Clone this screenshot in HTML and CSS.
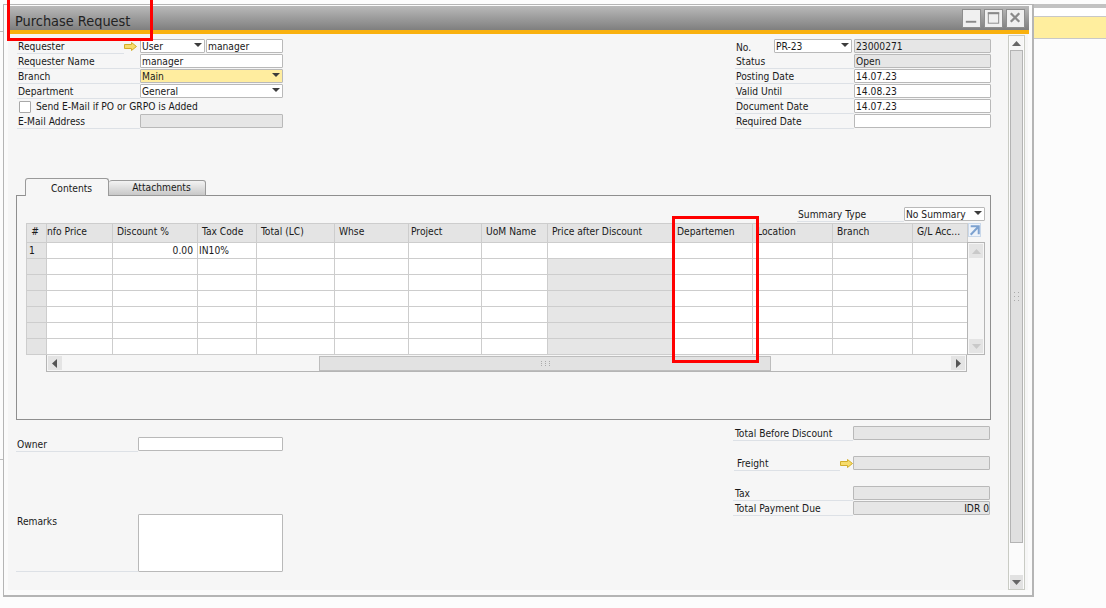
FILE: index.html
```html
<!DOCTYPE html>
<html lang="en">
<head>
<meta charset="utf-8">
<title>Purchase Request</title>
<link rel="stylesheet" href="styles.css">
</head>
<body>
<div class="desk-line desk-line-a"></div>
<div class="desk-line desk-line-b"></div>
<div class="behind">
  <div class="behind-top"></div>
  <div class="behind-white"></div>
  <div class="behind-yellow"></div>
</div>

<main class="window">
  <header class="titlebar">
    <h1 class="title">Purchase Request</h1>
    <div class="winbtns">
      <button class="winbtn"><svg width="18" height="18" viewBox="0 0 18 18"><rect x="3" y="12" width="11" height="2" fill="#8a8a8a"/></svg></button>
      <button class="winbtn"><svg width="18" height="18" viewBox="0 0 18 18"><rect x="3.5" y="3.5" width="11" height="11" fill="none" stroke="#8a8a8a"/><rect x="3" y="3" width="12" height="2" fill="#8a8a8a"/></svg></button>
      <button class="winbtn"><svg width="18" height="18" viewBox="0 0 18 18"><path d="M4 4l9 9M13 4l-9 9" stroke="#8a8a8a" stroke-width="2.4" fill="none"/></svg></button>
    </div>
  </header>
  <div class="accent"></div>

  <div class="client">
    <div class="content">
      <section class="head">
        <div class="col-left">
          <div class="row">
            <span class="lbl lbl-req">Requester</span>
            <svg class="arrow" width="13" height="9" viewBox="0 0 13 9"><path d="M.5 2.500h7V.5l5 4-5 4v-2h-7z" fill="#f7dc6c" stroke="#d3ae2c"/></svg>
            <span class="sel sel-user">User<i class="tri"></i></span>
            <span class="fld fld-mgr">manager</span>
          </div>
          <div class="row"><span class="lbl">Requester Name</span><span class="fld fld-full">manager</span></div>
          <div class="row"><span class="lbl">Branch</span><span class="sel fld-full sel-yellow">Main<i class="tri"></i></span></div>
          <div class="row"><span class="lbl">Department</span><span class="sel fld-full">General<i class="tri"></i></span></div>
          <div class="row row-check"><span class="check"></span><span class="check-text">Send E-Mail if PO or GRPO is Added</span></div>
          <div class="row"><span class="lbl">E-Mail Address</span><span class="fld fld-full fld-off"></span></div>
        </div>
        <div class="col-right">
          <div class="row">
            <span class="lbl lbl-no">No.</span>
            <span class="sel sel-no">PR-23<i class="tri"></i></span>
            <span class="fld fld-r fld-off">23000271</span>
          </div>
          <div class="row"><span class="lbl lbl-r">Status</span><span class="fld fld-r fld-off">Open</span></div>
          <div class="row"><span class="lbl lbl-r">Posting Date</span><span class="fld fld-r">14.07.23</span></div>
          <div class="row"><span class="lbl lbl-r">Valid Until</span><span class="fld fld-r">14.08.23</span></div>
          <div class="row"><span class="lbl lbl-r">Document Date</span><span class="fld fld-r">14.07.23</span></div>
          <div class="row"><span class="lbl lbl-r">Required Date</span><span class="fld fld-r"></span></div>
        </div>
      </section>

      <nav class="tabs">
        <span class="tab tab-on">Contents</span>
        <span class="tab tab-off">Attachments</span>
      </nav>
      <section class="panel">
        <div class="summary">
          <span class="lbl lbl-sum">Summary Type</span>
          <span class="sel sel-sum">No Summary<i class="tri"></i></span>
        </div>
        <div class="gridwrap">
          <div class="gridmain">
            <table class="grid">
              <colgroup>
                <col class="c-n"><col class="c-a"><col class="c-b"><col class="c-c"><col class="c-d"><col class="c-e"><col class="c-f"><col class="c-g"><col class="c-h"><col class="c-i"><col class="c-i"><col class="c-i"><col class="c-j">
              </colgroup>
              <thead>
                <tr><th class="num">#</th><th class="clip">nfo Price</th><th>Discount %</th><th>Tax Code</th><th>Total (LC)</th><th>Whse</th><th class="tight">Project</th><th>UoM Name</th><th>Price after Discount</th><th>Departemen</th><th>Location</th><th>Branch</th><th>G/L Acc...</th></tr>
              </thead>
              <tbody>
                <tr><td class="rn">1</td><td></td><td class="right">0.00</td><td>IN10%</td><td></td><td></td><td></td><td></td><td></td><td></td><td></td><td></td><td></td></tr>
                <tr><td class="rn"></td><td></td><td></td><td></td><td></td><td></td><td></td><td></td><td class="off"></td><td></td><td></td><td></td><td></td></tr>
                <tr><td class="rn"></td><td></td><td></td><td></td><td></td><td></td><td></td><td></td><td class="off"></td><td></td><td></td><td></td><td></td></tr>
                <tr><td class="rn"></td><td></td><td></td><td></td><td></td><td></td><td></td><td></td><td class="off"></td><td></td><td></td><td></td><td></td></tr>
                <tr><td class="rn"></td><td></td><td></td><td></td><td></td><td></td><td></td><td></td><td class="off"></td><td></td><td></td><td></td><td></td></tr>
                <tr><td class="rn"></td><td></td><td></td><td></td><td></td><td></td><td></td><td></td><td class="off"></td><td></td><td></td><td></td><td></td></tr>
                <tr><td class="rn"></td><td></td><td></td><td></td><td></td><td></td><td></td><td></td><td class="off"></td><td></td><td></td><td></td><td></td></tr>
              </tbody>
            </table>
            <div class="hscroll">
              <span class="sb-btn"><svg width="6" height="9" viewBox="0 0 6 9"><path d="M5 0v9L0 4.500z" fill="#555"/></svg></span>
              <span class="hspace hspace-a"></span>
              <span class="hthumb"><svg width="9" height="5" viewBox="0 0 9 5"><path d="M0 0h1v1H0zM4 0h1v1H4zM8 0h1v1H8zM0 2h1v1H0zM4 2h1v1H4zM8 2h1v1H8zM0 4h1v1H0zM4 4h1v1H4zM8 4h1v1H8z" fill="#aaa"/></svg></span>
              <span class="hspace"></span>
              <span class="sb-btn"><svg width="6" height="9" viewBox="0 0 6 9"><path d="M1 0v9l5-4.500z" fill="#555"/></svg></span>
            </div>
          </div>
          <div class="gridside">
            <span class="expand"><svg width="11" height="11" viewBox="0 0 13 13"><path d="M2 1.500h9.500V11M11 2L2 11.500" fill="none" stroke="#7da2d0" stroke-width="2.400"/></svg></span>
            <div class="vscroll">
              <span class="v-btn"><svg width="9" height="5" viewBox="0 0 9 5"><path d="M0 5h9L4.500 0z" fill="#c9c9c9"/></svg></span>
              <span class="v-btn"><svg width="9" height="5" viewBox="0 0 9 5"><path d="M0 0h9L4.500 5z" fill="#c9c9c9"/></svg></span>
            </div>
          </div>
        </div>
      </section>

      <section class="foot">
        <div class="foot-left">
          <div class="row foot-owner"><span class="lbl lbl-foot">Owner</span><span class="fld fld-foot"></span></div>
          <div class="row foot-remarks"><span class="lbl lbl-foot lbl-top">Remarks</span><span class="fld fld-foot fld-area"></span></div>
        </div>
        <div class="foot-right">
          <div class="row"><span class="lbl lbl-tot">Total Before Discount</span><span class="fld fld-tot fld-off"></span></div>
          <div class="row gap-row"><span class="lbl lbl-fr">Freight</span><svg class="arrow arrow-fr" width="13" height="9" viewBox="0 0 13 9"><path d="M.5 2.500h7V.5l5 4-5 4v-2h-7z" fill="#f7dc6c" stroke="#d3ae2c"/></svg><span class="fld fld-tot fld-off"></span></div>
          <div class="row gap-row"><span class="lbl lbl-tot">Tax</span><span class="fld fld-tot fld-off"></span></div>
          <div class="row"><span class="lbl lbl-tot">Total Payment Due</span><span class="fld fld-tot fld-off right">IDR 0</span></div>
        </div>
      </section>
    </div>

    <aside class="mainscroll">
      <span class="ms-btn ms-up"><svg width="9" height="5" viewBox="0 0 9 5"><path d="M0 5h9L4.500 0z" fill="#666"/></svg></span>
      <span class="ms-thumb"><svg width="5" height="9" viewBox="0 0 5 9"><path d="M0 0h1v1H0zM4 0h1v1H4zM0 4h1v1H0zM4 4h1v1H4zM0 8h1v1H0zM4 8h1v1H4z" fill="#aaa"/></svg></span>
      <span class="ms-space"></span>
      <span class="ms-btn ms-down"><svg width="9" height="5" viewBox="0 0 9 5"><path d="M0 0h9L4.500 5z" fill="#666"/></svg></span>
    </aside>
  </div>
</main>

<div class="mark mark-title"></div>
<div class="mark mark-col"></div>
</body>
</html>
```
FILE: styles.css
```css
* { box-sizing: border-box; }
html, body { margin: 0; height: 608px; overflow: hidden; }
body {
  background: #fcfcfc;
  font-family: "DejaVu Sans", "Noto Sans", sans-serif;
  font-stretch: condensed;
  font-size: 10.2px;
  color: #1a1a1a;
  position: relative;
}
.desk-line { position: absolute; left: 0; width: 4px; height: 1px; background: #bdbdbd; }
.desk-line-a { top: 31px; }
.desk-line-b { top: 459px; }
.behind { position: absolute; left: 1034px; top: 4px; width: 72px; }
.behind-top { height: 4px; background: #c2c2c2; }
.behind-white { height: 9px; background: #fff; border-bottom: 1px solid #c8c8c8; }
.behind-yellow { height: 22px; background: #ffee9e; border-bottom: 1px solid #c8c8c8; }

.window {
  position: absolute;
  left: 3px; top: 4px;
  width: 1031px; height: 593px;
  background: #fbfbfb;
  border: 1px solid #b5b5b5;
  border-right-width: 2px;
  border-bottom-width: 2px;
  padding: 1px 4px 5px 4px;
  display: flex;
  flex-direction: column;
}
.titlebar {
  height: 24px;
  margin-right: -1px;
  background: linear-gradient(#b9b9b9, #7f7f7f);
  display: flex;
  align-items: center;
  justify-content: space-between;
  padding: 0 4px 0 7px;
}
.title { margin: 0; padding-top: 5px; font-size: 14.4px; line-height: 18px; font-weight: 400; color: #222; }
.winbtns { display: flex; gap: 3px; }
.winbtn {
  width: 19px; height: 19px; padding: 0;
  background: #f0f0f0; border: 1px solid #8e8e8e;
  display: flex; align-items: center; justify-content: center;
}
.accent { height: 4px; margin-right: -1px; background: #f9b10f; }

.client {
  flex: 1;
  display: flex;
  background: #f6f6f6;
  min-height: 0;
}
.content { width: 1000px; padding: 5px 0 0 8px; }

.head { display: flex; justify-content: space-between; width: 975px; height: 142px; }
.col-left { width: 266px; margin-left: 1px; }
.col-right { width: 256px; }
.row { display: flex; height: 15px; align-items: stretch; }

.lbl {
  display: flex; align-items: center;
  width: 123px; height: 15px; padding: 1px 0 0 1px;
  border-bottom: 1px solid #dde1e6;
  white-space: nowrap;
  line-height: 13px;
}
.lbl-req { width: 107px; }
.lbl-r { width: 119px; }
.lbl-no { width: 39px; border-bottom: 0; }
.arrow { margin: 3px 3px 0 0; flex: none; }
.arrow-fr { margin-right: 0; }

.fld, .sel {
  display: block; position: relative;
  height: 14px; line-height: 12px;
  background: #fff;
  border: 1px solid #b9b9b9;
  border-radius: 1px;
  padding: 1px 0 0 1px;
  white-space: nowrap;
}
.fld-full { width: 143px; }
.sel-user { width: 65px; }
.fld-mgr { width: 77px; margin-left: 1px; }
.sel-yellow { background: #ffed9f; }
.fld-off { background: #e6e6e6; }
.fld-r { width: 137px; }
.sel-no { width: 78px; margin-right: 2px; }
.right { text-align: right; }
.tri {
  position: absolute; right: 2px; top: 3px;
  width: 0; height: 0;
  border-left: 4px solid transparent;
  border-right: 4px solid transparent;
  border-top: 4px solid #3c3c3c;
}
.row-check { align-items: center; padding-left: 2px; }
.check { width: 12px; height: 12px; background: #fff; border: 1px solid #a8a8a8; border-radius: 1px; }
.check-text { margin-left: 5px; }

.tabs { display: flex; height: 18px; padding-left: 9px; margin-top: -3px; position: relative; z-index: 1; margin-bottom: -1px; }
.tab { display: flex; align-items: center; justify-content: center; border: 1px solid #9a9a9a; border-radius: 3px 3px 0 0; padding: 0 0 1px 9px; }
.tab-on { width: 84px; background: #f6f6f6; border-bottom: 0; padding-top: 2px; }
.tab-off { width: 97px; height: 16px; margin-top: 2px; background: linear-gradient(#f3f3f3, #c8c8c8); border-left: 0; }

.panel {
  width: 975px; height: 225px;
  border: 1px solid #8f8f8f;
  padding: 11px 5px 0 10px;
}
.summary { display: flex; justify-content: flex-end; height: 15px; align-items: flex-start; }
.lbl-sum { width: 107px; padding-left: 1px; }
.sel-sum { width: 81px; }

.gridwrap { display: flex; margin: 1px 0 0 -1px; }
.gridmain { width: 941px; }
.gridside { width: 18px; }
.grid { border-collapse: collapse; table-layout: fixed; width: 941px; }
.c-n { width: 20px; } .c-a { width: 66px; } .c-b { width: 85px; } .c-c { width: 59px; }
.c-d { width: 78px; } .c-e { width: 74px; } .c-f { width: 73px; } .c-g { width: 66px; }
.c-h { width: 125px; } .c-i { width: 80px; } .c-j { width: 55px; }
.grid th {
  height: 19px; padding: 0 0 3px 4px;
  background: #e4e4e4;
  border: 1px solid #cdcdcd;
  font-weight: 400; text-align: left; white-space: nowrap; overflow: hidden;
}
.grid th.num { text-align: center; padding: 0 3px 3px 0; }
.grid th.clip { padding-left: 0; }
.grid th.tight { padding-left: 2px; }
.grid td {
  height: 16px; padding: 0 4px 0 1px;
  background: #fff;
  border: 1px solid #cdcdcd;
  line-height: 12px;
}
.grid td.rn { background: #e4e4e4; padding-left: 2px; }
.grid td.off { background: #e6e6e6; }
.grid td.right { text-align: right; }

.hscroll {
  display: flex; align-items: center;
  margin-left: 20px; height: 17px; padding: 1px;
  border: solid #b5b5b5; border-width: 0 1px 1px 1px;
}
.sb-btn { width: 14px; height: 14px; background: #e4e4e4; display: flex; align-items: center; justify-content: center; }
.hspace { flex: 1; }
.hspace-a { flex: none; width: 257px; }
.hthumb { width: 452px; height: 15px; background: #e2e2e2; border: 1px solid #bdbdbd; display: flex; align-items: center; justify-content: center; }

.expand { display: flex; height: 14px; width: 13px; margin-left: 1px; background: #eef3fa; border: 1px solid #c9d8ea; align-items: center; justify-content: center; }
.vscroll {
  height: 113px; margin-top: 5px;
  border: 1px solid #b5b5b5; background: #f6f6f6;
  padding: 1px; display: flex; flex-direction: column; justify-content: space-between; align-items: center;
}
.v-btn { width: 14px; height: 14px; background: #e4e4e4; display: flex; align-items: center; justify-content: center; }

.foot { display: flex; justify-content: space-between; width: 975px; height: 156px; }
.foot-left { width: 267px; }
.foot-owner { margin-top: 17px; }
.foot-remarks { margin-top: 62px; height: 58px; }
.foot-right { width: 257px; margin: 6px 1px 0 0; }
.lbl-foot { width: 122px; }
.lbl-top { height: 58px; align-items: flex-start; }
.fld-foot { width: 145px; }
.fld-area { height: 58px; }
.lbl-tot { width: 120px; padding-left: 2px; }
.lbl-fr { width: 106px; padding-left: 3px; margin-left: 1px; }
.fld-tot { width: 137px; }
.gap-row { margin-top: 15px; }

.mainscroll {
  width: 17px; margin: 1px 0 0 0;
  display: flex; flex-direction: column;
  border: 1px solid #c9cbc4; background: #fbfbfb;
  padding: 0 1px;
}
.ms-btn { height: 14px; background: #e2e2e2; display: flex; align-items: center; justify-content: center; flex: none; }
.ms-up { background: #f6f6f6; }
.ms-thumb { height: 493px; background: #e0e0e0; border: 1px solid #b4b4b4; display: flex; align-items: center; justify-content: center; flex: none; }
.ms-space { flex: 1; }

.mark { position: absolute; border: 3px solid #f00; pointer-events: none; }
.mark-title { left: 7px; top: -3px; width: 146px; height: 44px; }
.mark-col { left: 672px; top: 216px; width: 87px; height: 147px; }
```
